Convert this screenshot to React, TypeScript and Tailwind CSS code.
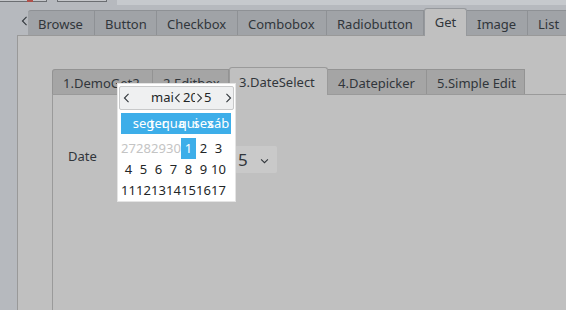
import React from "react";

const Chev = ({ dir, className }: { dir: "l" | "r" | "d"; className?: string }) => {
  const d = dir === "l" ? "M6 1 L1.5 5.5 L6 10" : dir === "r" ? "M1.5 1 L6 5.5 L1.5 10" : "M1 1.5 L5 5.5 L9 1.5";
  const vb = dir === "d" ? "0 0 10 7" : "0 0 7.5 11";
  return (
    <svg viewBox={vb} className={`shrink-0 ${className ?? ""}`} fill="none" stroke="#31363b" strokeWidth="1.2">
      <path d={d} />
    </svg>
  );
};

const outerTabs = [
  { t: "Browse", w: 67 },
  { t: "Button", w: 62 },
  { t: "Checkbox", w: 81 },
  { t: "Combobox", w: 89 },
  { t: "Radiobutton", w: 97 },
  { t: "Get", w: 43, sel: true },
  { t: "Image", w: 61 },
  { t: "List", w: 60 },
];

const innerTabs = [
  { t: "1.DemoGet2", w: 101 },
  { t: "2.Editbox", w: 76 },
  { t: "3.DateSelect", w: 99, sel: true },
  { t: "4.Datepicker", w: 99 },
  { t: "5.Simple Edit", w: 98 },
];

const days = ["", "seg", "ter", "qua", "qui", "sex", "sáb"];
const rows: { n: string; g?: boolean; s?: boolean }[][] = [
  [{ n: "27", g: true }, { n: "28", g: true }, { n: "29", g: true }, { n: "30", g: true }, { n: "1", s: true }, { n: "2" }, { n: "3" }],
  [{ n: "4" }, { n: "5" }, { n: "6" }, { n: "7" }, { n: "8" }, { n: "9" }, { n: "10" }],
  [{ n: "11" }, { n: "12" }, { n: "13" }, { n: "14" }, { n: "15" }, { n: "16" }, { n: "17" }],
];

export default function App() {
  return (
    <div
      className="w-[566px] h-[310px] bg-[#b6b9be] relative overflow-hidden flex flex-col text-[13px] text-[#31363b]"
      style={{ fontFamily: '"Noto Sans", sans-serif' }}
    >
      {/* top strip */}
      <div className="h-[8px] flex items-start shrink-0">
        <div className="w-[47px] h-[2px] bg-[#c4c6ca] border-r border-b border-[#6b6e72] relative">
          <div className="absolute left-[27px] top-0 w-[6px] h-[2px] bg-[#b0504a]" />
        </div>
        <div className="ml-[10px] w-[50px] h-[2px] bg-[#c4c6ca] border-l border-r border-b border-[#6b6e72]" />
        <div className="ml-[10px] flex-1 h-[5px] bg-[#c6c9cd]" />
      </div>
      {/* outer tab bar */}
      <div className="h-[27px] flex items-end shrink-0 relative z-10">
        <div className="w-[33px] h-full flex items-start pt-[8px] pl-[21px]">
          <Chev dir="l" className="w-[7px] h-[10px]" />
        </div>
        {outerTabs.map((t, i) =>
          t.sel ? (
            <div
              key={i}
              style={{ width: t.w }}
              className="h-[28px] mb-[-1px] bg-[#c0c0c0] border border-b-0 border-[#96999d] rounded-t-[3px] flex items-center justify-center pt-[1px] shrink-0"
            >
              {t.t}
            </div>
          ) : (
            <div
              key={i}
              style={{ width: t.w }}
              className={`h-[25px] bg-[#a0a3a7] border-t border-r border-[#8e9195] flex items-center pl-[10px] pt-[4px] shrink-0 whitespace-nowrap ${i === 0 ? "rounded-tl-[3px]" : ""}`}
            >
              {t.t}
            </div>
          )
        )}
      </div>
      {/* outer pane */}
      <div className="flex-1 ml-[17px] bg-[#c0c0c0] border-l border-t border-[#999999] flex flex-col">
        <div className="h-[31px] shrink-0" />
        <div className="h-[27px] pl-[34px] flex items-end shrink-0 relative z-10">
          {innerTabs.map((t, i) =>
            t.sel ? (
              <div
                key={i}
                style={{ width: t.w }}
                className="h-[28px] mb-[-1px] bg-[#c0c0c0] border border-b-0 border-[#9a9a9a] rounded-t-[3px] flex items-center pl-[9px] pt-[2px] shrink-0 whitespace-nowrap"
              >
                {t.t}
              </div>
            ) : (
              <div
                key={i}
                style={{ width: t.w }}
                className={`h-[25px] bg-[#a5a5a5] border-t border-r border-[#939393] flex items-center pl-[10px] pt-[4px] shrink-0 whitespace-nowrap ${i === 0 ? "border-l rounded-tl-[3px]" : ""}`}
              >
                {t.t}
              </div>
            )
          )}
        </div>
        <div className="flex-1 ml-[34px] border-l border-t border-[#9a9a9a] flex flex-col">
          <div className="mt-[51px] flex items-center pl-[15px]">
            <div className="w-[167px] pb-[6px]">Date</div>
            <div className="w-[42px] h-[27px] bg-[#c9c9c9] rounded-[2px] flex items-center pl-[3px]">
              <span className="text-[17px] leading-none">5</span>
              <Chev dir="d" className="ml-[12px] mt-[3px] w-[9px] h-[6px]" />
            </div>
          </div>
        </div>
      </div>
      {/* calendar popup */}
      <div className="absolute left-[117px] top-[83px] w-[119px] h-[119px] bg-white border border-[#e4e4e4] z-20 flex flex-col text-[#232627]">
        <div className="mx-[1px] mt-[2px] h-[24px] bg-[#eff0f1] border border-[#c8c9ca] rounded-[2px] flex items-center">
          <Chev dir="l" className="ml-[3px] w-[7px] h-[10px]" />
          <span className="ml-[21px] w-[23px] shrink-0 leading-none whitespace-nowrap">mai</span>
          <Chev dir="l" className="w-[7px] h-[10px]" />
          <span className="ml-[2px] w-[12px] shrink-0 overflow-hidden leading-none whitespace-nowrap">20</span>
          <Chev dir="r" className="ml-[1px] w-[7px] h-[10px]" />
          <span className="ml-[1px] w-[8px] shrink-0 leading-none">5</span>
          <Chev dir="r" className="ml-[13px] w-[7px] h-[10px]" />
        </div>
        <div className="ml-[3px] mt-[3px] w-[110px] h-[22px] bg-[#3daee9] grid grid-cols-[repeat(7,15px)] items-center text-white">
          {days.map((d, i) => (
            <div key={i} className="flex justify-center whitespace-nowrap overflow-visible">
              <span>{d}</span>
            </div>
          ))}
        </div>
        <div className="ml-[3px] mt-[4px] grid grid-cols-[repeat(7,15px)] grid-rows-[repeat(3,21px)]">
          {rows.flat().map((c, i) => (
            <div
              key={i}
              className={`flex items-center justify-center whitespace-nowrap ${c.s ? "bg-[#3daee9] text-white" : ""} ${c.g ? "text-[#c4c4c4]" : ""}`}
            >
              <span>{c.n}</span>
            </div>
          ))}
        </div>
      </div>
    </div>
  );
}
